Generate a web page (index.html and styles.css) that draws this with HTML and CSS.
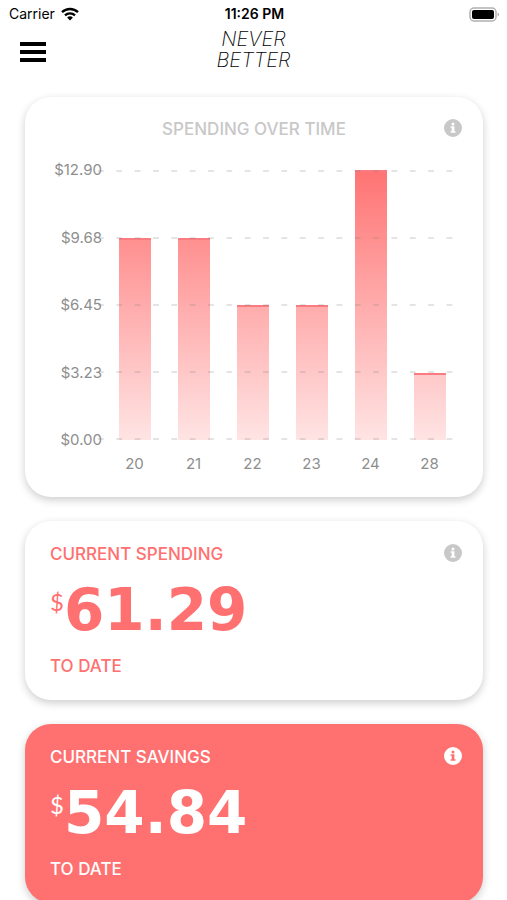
FILE: index.html
```html
<!DOCTYPE html>
<html lang="en">
<head>
    <meta charset="UTF-8">
    <meta name="viewport" content="width=device-width, initial-scale=1">
    <title>Never Better</title>
    <link rel="stylesheet" href="styles.css">
</head>
<body>
<svg class="defs" width="0" height="0" aria-hidden="true">
    <symbol id="info" viewBox="0 0 18 18">
        <path fill="currentColor" fill-rule="evenodd" d="M9 0a9 9 0 1 0 0 18A9 9 0 0 0 9 0zM7.5 4.9a1.5 1.5 0 1 0 3 0a1.5 1.5 0 0 0-3 0zM6.6 7.3h3.8v4.9h1.1v1.5H6.6v-1.5h1.1V8.8H6.6z"/>
    </symbol>
</svg>

<div class="status">
    <div class="carrier">
        <span>Carrier</span>
        <svg width="18" height="14" viewBox="0 0 18 14" aria-hidden="true">
            <g fill="none" stroke="#000" stroke-width="2.4">
                <path d="M1 5.2a11.5 11.5 0 0 1 16 0"/>
                <path d="M4 8.4a7.2 7.2 0 0 1 10 0"/>
            </g>
            <path d="M6.1 10.6a4.2 4.2 0 0 1 5.8 0L9 13.6z"/>
        </svg>
    </div>
    <div class="time">11:26 PM</div>
    <div class="battery">
        <svg width="31" height="15" viewBox="0 0 31 15" aria-hidden="true">
            <rect x="1" y="1" width="26" height="13" rx="4" fill="#fff" stroke="#b0b0b0" stroke-width="1.5"/>
            <rect x="3" y="3" width="22" height="9" rx="2"/>
            <path d="M28.6 5.5c2 .8 2 3.200 0 4z" fill="#b0b0b0"/>
        </svg>
    </div>
</div>

<header class="nav">
    <button class="menu" type="button" aria-label="Menu"><i></i><i></i><i></i></button>
    <h1 class="logo">NEVER<br>BETTER</h1>
</header>

<main class="cards">
    <section class="card card-chart">
        <div class="head">
            <h2 class="label">SPENDING OVER TIME</h2>
            <button class="info" type="button" aria-label="About spending over time"><svg><use href="#info"/></svg></button>
        </div>
        <div class="chart">
            <div class="scale">
                <span>$12.90</span>
                <span>$9.68</span>
                <span>$6.45</span>
                <span>$3.23</span>
                <span>$0.00</span>
            </div>
            <div class="plot">
                <div class="bars">
                    <div class="bar" style="height: 75%"></div>
                    <div class="bar" style="height: 75%"></div>
                    <div class="bar" style="height: 50%"></div>
                    <div class="bar" style="height: 50%"></div>
                    <div class="bar" style="height: 100%"></div>
                    <div class="bar" style="height: 25%"></div>
                </div>
                <div class="lines"><i></i><i></i><i></i><i></i><i></i></div>
            </div>
            <div class="days">
                <span>20</span>
                <span>21</span>
                <span>22</span>
                <span>23</span>
                <span>24</span>
                <span>28</span>
            </div>
        </div>
    </section>

    <section class="card">
        <div class="head">
            <h2 class="label">CURRENT SPENDING</h2>
            <button class="info" type="button" aria-label="About current spending"><svg><use href="#info"/></svg></button>
        </div>
        <p class="amount"><span class="currency">$</span><span>61.29</span></p>
        <p class="label">TO DATE</p>
    </section>

    <section class="card card-savings">
        <div class="head">
            <h2 class="label">CURRENT SAVINGS</h2>
            <button class="info" type="button" aria-label="About current savings"><svg><use href="#info"/></svg></button>
        </div>
        <p class="amount"><span class="currency">$</span><span>54.84</span></p>
        <p class="label">TO DATE</p>
    </section>
</main>
</body>
</html>
```

FILE: styles.css
```css
* {
    box-sizing: border-box;
    margin: 0;
    padding: 0;
}

html {
    scrollbar-width: none;
}

body {
    background: #fff;
    color: #000;
    font-family: Inter, "Open Sans", sans-serif;
}

button {
    border: 0;
    background: none;
    color: inherit;
    cursor: pointer;
}

.defs {
    display: block;
}

/* status bar */
.status {
    display: grid;
    grid-template-columns: 1fr auto 1fr;
    align-items: center;
    height: 28px;
    padding: 0 7px 0 9px;
    font-size: 14px;
    line-height: 20px;
}

.carrier {
    display: flex;
    align-items: center;
    gap: 6px;
}

.time {
    font-weight: 600;
}

.battery {
    display: flex;
    justify-content: flex-end;
}

/* top navigation */
.nav {
    display: grid;
    grid-template-columns: 26px 1fr 26px;
    align-items: center;
    padding: 0 20px;
    height: 44px;
}

.menu {
    display: flex;
    flex-direction: column;
    gap: 4px;
    padding-top: 4px;
}

.menu i {
    width: 26px;
    height: 4px;
    background: #000;
}

.logo {
    font-size: 20px;
    font-weight: 200;
    font-style: italic;
    line-height: 21px;
    text-align: center;
}

/* cards */
.cards {
    display: flex;
    flex-direction: column;
    gap: 24px;
    padding: 25px 24px 24px 25px;
}

.card {
    display: flex;
    flex-direction: column;
    gap: 22px;
    padding: 23px 21px 24px 25px;
    border-radius: 26px;
    background: #fff;
    color: #ff7070;
    box-shadow: 0 3px 8px rgba(0, 0, 0, 0.2);
}

.card-savings {
    background: #ff7070;
    color: #fff;
}

.head {
    display: flex;
    justify-content: space-between;
    align-items: flex-start;
}

.label {
    font-size: 17px;
    font-weight: 500;
    line-height: 20px;
}

.info {
    width: 18px;
    height: 18px;
    color: #c8c8c8;
}

.info svg {
    display: block;
    width: 18px;
    height: 18px;
}

.card-savings .info {
    color: #fff;
}

.amount {
    display: flex;
    font: 700 58px/48px "DejaVu Sans", sans-serif;
}

.currency {
    font: 400 24px/32px Lato, sans-serif;
}

/* spending chart */
.card-chart {
    gap: 21px;
    padding: 22px 21px 23px;
    color: #c8c8c8;
}

.card-chart .head {
    display: grid;
    grid-template-columns: 1fr auto 1fr;
}

.card-chart .label {
    grid-column: 2;
}

.card-chart .info {
    justify-self: end;
}

.chart {
    display: grid;
    grid-template-columns: 52px 1fr;
    margin-right: -3px;
    color: #8e8e8e;
    font-size: 15px;
    line-height: 20px;
}

.scale {
    display: flex;
    flex-direction: column;
    justify-content: space-between;
    margin-right: -4px;
    text-align: right;
}

.plot {
    display: grid;
    height: 290px;
    padding: 10px 0;
}

.bars,
.lines {
    grid-area: 1 / 1;
}

.bars,
.days {
    display: grid;
    grid-template-columns: repeat(6, 1fr);
    padding: 0 6px 0 7px;
}

.bars {
    align-items: end;
    justify-items: center;
}

/* the fade spans the whole plot, each bar shows its lower part */
.bar {
    width: 32px;
    border-top: 2px solid #fa7b80;
    background: linear-gradient(#ff7373, #ffe4e4) bottom / 100% 270px no-repeat;
}

.lines {
    display: flex;
    flex-direction: column;
    justify-content: space-between;
}

.lines i {
    height: 2px;
    background: linear-gradient(90deg, rgba(120, 120, 120, 0.2) 6px, transparent 6px) 0 0 / 5% 2px;
}

.days {
    grid-column: 2;
    margin-top: 4px;
    text-align: center;
}
```
